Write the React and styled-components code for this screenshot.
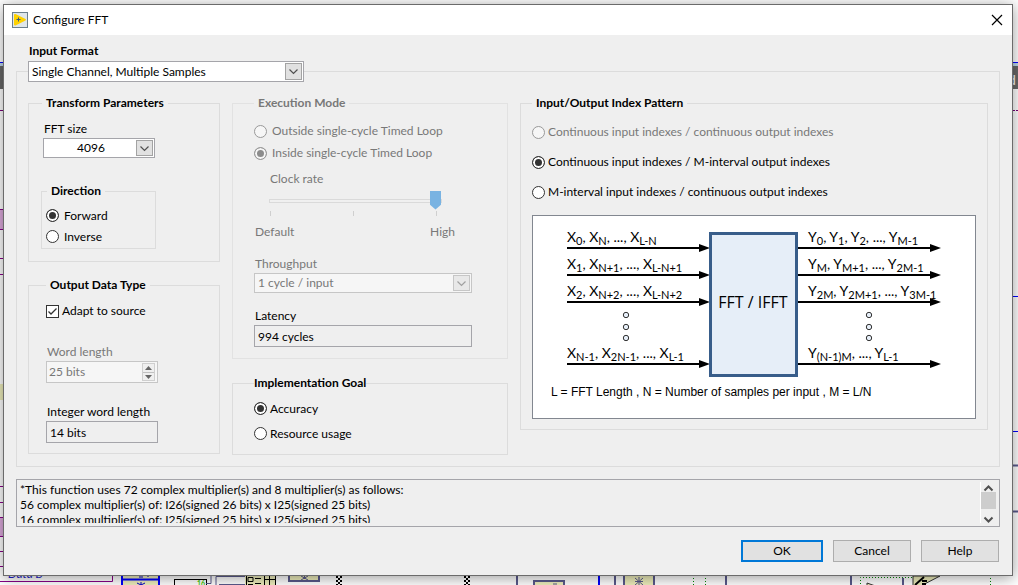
import React from "react";
import styled, { createGlobalStyle, css } from "styled-components";

const Global = createGlobalStyle`
  * { box-sizing: border-box; }
  body {
    margin: 0;
    background: #fff;
    color: #000;
    font: 12px/16px Lato, "Open Sans", sans-serif;
  }
  button, input, select, textarea { font: inherit; color: inherit; }
`;

const Desktop = styled.main`
  position: relative;
  min-height: 100vh;
  overflow: hidden;
  padding: 4px 5px 9px 3px;
`;

const Backdrop = styled.svg`
  position: absolute;
  inset: 0;
  width: 100%;
  height: 100%;
`;

const Dialog = styled.section`
  position: relative;
  border: 1px solid #6b6b6b;
  background: #efefef;
  box-shadow: 0 2px 14px rgba(0, 0, 0, 0.4);
`;

const TitleBar = styled.header`
  display: flex;
  align-items: center;
  gap: 5px;
  height: 30px;
  padding: 0 7px 0 8px;
  background: #fff;
`;

const Title = styled.h1`
  flex: 1;
  margin: 0;
  font-size: 12px;
  font-weight: 400;
`;

const CloseButton = styled.button`
  display: grid;
  place-items: center;
  padding: 2px;
  border: 0;
  background: none;
`;

const Content = styled.div`
  padding: 8px 12px 13px 12px;
`;

const FormatField = styled.div`
  position: relative;
  display: grid;
  width: 276px;
  margin: 0 0 -11px 12px;
`;

const FormatLabel = styled.label`
  font-weight: 700;
  padding-left: 1px;
  margin-bottom: 2px;
`;

const Frame = styled.div`
  display: grid;
  grid-template-columns: 192fr 276fr 468fr;
  gap: 12px;
  align-items: start;
  border: 1px solid #dcdcdc;
  padding: 23px 11px 11px;
`;

const Column = styled.div`
  display: flex;
  flex-direction: column;
  gap: ${(p) => p.$gap || 15}px;
`;

const Group = styled.fieldset`
  min-width: 0;
  margin: ${(p) => p.$top || 0}px 0 0;
  border: 1px solid ${(p) => (p.$dim ? "#e2e2e2" : "#dcdcdc")};
  padding: ${(p) => p.$pad};
  width: ${(p) => p.$width || "auto"};
`;

const Legend = styled.legend`
  margin-left: ${(p) => p.$indent || 0}px;
  padding: 0 ${(p) => (p.$tight ? 0 : 4)}px;
  font-weight: 700;
  color: ${(p) => (p.$dim ? "#787878" : "#000")};
`;

const Field = styled.div`
  display: grid;
  grid-template-columns: minmax(0, 1fr);
  width: ${(p) => p.$width || "auto"};
  margin-top: ${(p) => p.$top || 0}px;
  margin-left: ${(p) => p.$indent || 0}px;
`;

const FieldLabel = styled.label`
  padding-left: 1px;
  margin-bottom: ${(p) => p.$below || 1}px;
  color: ${(p) => (p.$dim ? "#787878" : "#000")};
`;

const SelectBox = styled.span`
  position: relative;
  display: block;
`;

const Select = styled.select`
  appearance: none;
  display: block;
  width: 100%;
  height: ${(p) => p.$height || 20}px;
  padding: 0 ${(p) => (p.$align ? 19 : 24)}px 0 3px;
  border: 1px solid ${(p) => (p.disabled ? "#c6c6c6" : "#a5a5aa")};
  border-radius: 0;
  background: ${(p) => (p.disabled ? "#f6f6f6" : "#fff")};
  color: ${(p) => (p.disabled ? "#787878" : "#000")};
  opacity: 1;
  text-align-last: ${(p) => p.$align || "left"};
`;

const SelectArrow = styled.span`
  position: absolute;
  top: 2px;
  right: 2px;
  bottom: 2px;
  width: 17px;
  display: grid;
  place-items: center;
  pointer-events: none;
  border: 1px solid ${(p) => (p.$dim ? "#c6c6c6" : "#a3a3a3")};
  background: ${(p) => (p.$dim ? "#e8e8e8" : "#e1e1e1")};
  color: ${(p) => (p.$dim ? "#a0a0a0" : "#505050")};
`;

const Choice = styled.label`
  display: flex;
  align-items: center;
  gap: ${(p) => p.$gap || 3}px;
  height: ${(p) => p.$height || 16}px;
  color: ${(p) => (p.$dim ? "#787878" : "#000")};
  white-space: nowrap;
`;

const mark = css`
  appearance: none;
  flex: none;
  width: 13px;
  height: 13px;
  margin: 0;
  border: 1px solid #333;
  background: #fff;
`;

const RadioInput = styled.input`
  ${mark}
  border-radius: 50%;
  &:checked { background: #333; box-shadow: inset 0 0 0 2px #fff; }
  &:disabled { border-color: #999; background: #f6f6f6; }
  &:disabled:checked { background: #8c8c8c; box-shadow: inset 0 0 0 2px #f6f6f6; }
`;

const CheckInput = styled.input`
  ${mark}
  display: block;
`;

const CheckMark = styled.span`
  position: relative;
  svg { position: absolute; inset: 0; pointer-events: none; }
`;

const Spinner = styled.div`
  display: flex;
  align-items: center;
  height: 22px;
  border: 1px solid #c6c6c6;
  background: #f6f6f6;
  padding-right: 2px;
`;

const SpinnerInput = styled.input`
  flex: 1;
  min-width: 0;
  width: 100%;
  border: 0;
  padding: 0 2px;
  background: none;
  color: #787878;
`;

const SpinButtons = styled.span`
  flex: none;
  display: grid;
  width: 13px;
  border: 1px solid #cfcfcf;
`;

const SpinButton = styled.button`
  display: grid;
  place-items: center;
  height: 8px;
  padding: 0;
  border: 0;
  background: #efefef;
  & + & { border-top: 1px solid #c0c0c0; }
`;

const ReadOut = styled.input`
  width: 100%;
  height: 22px;
  padding: 0 3px;
  border: 1px solid #a5a5aa;
  background: #efefef;
`;

const Slider = styled.div`
  display: grid;
  width: 176px;
  margin: 7px 0 0 15px;
`;

const Range = styled.input`
  appearance: none;
  width: 100%;
  height: 19px;
  margin: 0;
  background: none;
  &::-webkit-slider-runnable-track {
    height: 4px;
    margin-right: 3px;
    border: 1px solid #dadada;
    background: #f0f0f0;
  }
  &::-webkit-slider-thumb {
    appearance: none;
    width: 11px;
    height: 19px;
    margin-top: -9px;
    background: #79b3e2;
    clip-path: polygon(0 0, 100% 0, 100% 75%, 50% 100%, 0 75%);
  }
`;

const Ticks = styled.div`
  display: flex;
  justify-content: space-between;
  margin: 1px 8px 0 1px;
  i { width: 1px; height: 5px; background: #cfcfcf; }
`;

const RangeEnds = styled.div`
  display: flex;
  justify-content: space-between;
  width: 201px;
  margin-top: 8px;
  padding-left: 1px;
  color: #787878;
`;

const Figure = styled.figure`
  margin: 8px 0 0;
  border: 1px solid #828790;
  background: #fff;
  svg { display: block; width: 100%; height: auto; }
`;

const LogBox = styled.div`
  display: flex;
  height: 48px;
  margin-top: 12px;
  padding: 2px 3px 3px 0;
  border: 1px solid #a5a5aa;
`;

const LogText = styled.textarea`
  flex: 1;
  border: 0;
  margin: 0;
  padding: 0 3px;
  resize: none;
  overflow: hidden;
  outline: 0;
  background: none;
  line-height: 15px;
`;

const ScrollBar = styled.div`
  display: grid;
  grid-template-rows: 10px 17px 1fr;
  width: 16px;
  border-left: 1px solid #fff;
  justify-items: center;
  b { width: 100%; background: #cdcdcd; }
`;

const ScrollButton = styled.button`
  display: grid;
  place-items: end center;
  padding: 0;
  border: 0;
  background: none;
  color: #505050;
`;

const Actions = styled.footer`
  display: flex;
  justify-content: flex-end;
  gap: 10px;
  margin-top: 13px;
  padding-right: 1px;
`;

const ActionButton = styled.button`
  width: ${(p) => (p.$primary ? 82 : 78)}px;
  height: 22px;
  padding: 0;
  border: ${(p) => (p.$primary ? "2px solid #0078d7" : "1px solid #adadad")};
  background: #e1e1e1;
`;

const Chevron = ({ up = false, bold = false }) => (
  <svg width="11" height="7" viewBox="0 0 11 7" aria-hidden="true">
    <path
      d={up ? "M1.5 5.5l4-4 4 4" : "M1.5 1.5l4 4 4-4"}
      fill="none"
      stroke="currentColor"
      strokeWidth={bold ? 2 : 1.2}
    />
  </svg>
);

function DropDown({ id, options, disabled, height, align }) {
  return (
    <SelectBox>
      <Select id={id} disabled={disabled} $height={height} $align={align}>
        {options.map((o) => (
          <option key={o}>{o}</option>
        ))}
      </Select>
      <SelectArrow $dim={disabled}>
        <Chevron />
      </SelectArrow>
    </SelectBox>
  );
}

function Radio({ name, label, checked, disabled, height, gap }) {
  return (
    <Choice $height={height} $gap={gap} $dim={disabled}>
      <RadioInput type="radio" name={name} defaultChecked={checked} disabled={disabled} />
      {label}
    </Choice>
  );
}

/* Terms are [base, subscript] pairs, drawn as a comma separated list. */
function Series({ x, y, terms }) {
  return (
    <text x={x} y={y} fontFamily="Lato, sans-serif" fontSize="14">
      {terms.map(([base, sub], i) => (
        <React.Fragment key={i}>
          <tspan>{base}</tspan>
          {sub && (
            <tspan dy="3" fontSize="11">
              {sub}
            </tspan>
          )}
          {i < terms.length - 1 && <tspan dy={sub ? -3 : 0}>{", "}</tspan>}
        </React.Fragment>
      ))}
    </text>
  );
}

function Arrow({ x1, x2, y }) {
  return (
    <g>
      <path d={`M${x1} ${y}H${x2 - 6}`} stroke="#000" strokeWidth="2" />
      <path d={`M${x2} ${y}l-11 -4v8z`} />
    </g>
  );
}

const rows = [
  {
    y: 32,
    input: [["X", "0"], ["X", "N"], ["..."], ["X", "L-N"]],
    output: [["Y", "0"], ["Y", "1"], ["Y", "2"], ["..."], ["Y", "M-1"]],
  },
  {
    y: 59,
    input: [["X", "1"], ["X", "N+1"], ["..."], ["X", "L-N+1"]],
    output: [["Y", "M"], ["Y", "M+1"], ["..."], ["Y", "2M-1"]],
  },
  {
    y: 86,
    input: [["X", "2"], ["X", "N+2"], ["..."], ["X", "L-N+2"]],
    output: [["Y", "2M"], ["Y", "2M+1"], ["..."], ["Y", "3M-1"]],
  },
  {
    y: 148,
    input: [["X", "N-1"], ["X", "2N-1"], ["..."], ["X", "L-1"]],
    output: [["Y", "(N-1)M"], ["..."], ["Y", "L-1"]],
  },
];

function Diagram() {
  return (
    <svg viewBox="0 0 442 202" role="img" aria-label="FFT index pattern">
      {rows.map((r) => (
        <g key={r.y}>
          <Series x={34} y={r.y - 6} terms={r.input} />
          <Arrow x1={34} x2={177} y={r.y} />
          <Series x={275} y={r.y - 6} terms={r.output} />
          <Arrow x1={264} x2={408} y={r.y} />
        </g>
      ))}
      {[93, 336].map((x) =>
        [99, 111, 122].map((y) => (
          <circle key={`${x}-${y}`} cx={x} cy={y} r="2.7" fill="#e6eef8" stroke="#333" />
        ))
      )}
      <rect x="177.5" y="17.5" width="86" height="142" fill="#e6eef8" stroke="#385d8a" strokeWidth="3" />
      <text x="220" y="92" textAnchor="middle" fontFamily="'Open Sans', sans-serif" fontSize="16">
        FFT / IFFT
      </text>
      <text x="18" y="180" fontFamily="'Liberation Sans', sans-serif" fontSize="12">
        L = FFT Length , N = Number of samples per input , M = L/N
      </text>
    </svg>
  );
}

/* The block diagram that shows round the edges of the dialog. */
function BlockDiagram() {
  return (
    <Backdrop aria-hidden="true">
      <defs>
        <pattern id="checker" width="4" height="4" patternUnits="userSpaceOnUse">
          <rect width="4" height="4" fill="#fff" />
          <path d="M0 0h2v2h-2zM2 2h2v2h-2z" />
        </pattern>
      </defs>
      <path d="M0 62.5H1018M1010 296.5H1018M1010 431.5H1018" stroke="#00f" />
      <path d="M0 63H1018V66H0z" fill="#bcd7ea" />
      <path d="M0 66H1018V89H0z" fill="#686868" />
      <text x="1008" y="85" fontSize="14" fill="#fff">d</text>
      <path d="M0 110.5H1018" stroke="#707" strokeDasharray="3 1" />
      <path d="M1010 465.5H1018M1010 511.5H1018" stroke="#5a5a8c" strokeWidth="2" />
      <path d="M0 210H4V229H0zM0 518H4V536H0z" fill="#dcaadc" />
      <path
        d="M0 209.5H4M0 229.5H4M0 258.5H4M0 274.5H4M0 486.5H4M0 502.5H4M0 517.5H4M0 536.5H4M0 551.5H4M0 566.5H4"
        stroke="#808"
      />
      <path d="M0 384H4V400H0z" fill="#eeeebc" />
      <path d="M0 581.5H112.5V570" fill="none" stroke="#808" />
      <text x="8" y="578" fontSize="12" fontStyle="italic" fill="#22c">Data B</text>
      <rect x="122" y="570" width="37" height="20" fill="#eeeebc" stroke="#00f" strokeWidth="2" />
      <path d="M122 579.5H159" stroke="#00f" strokeWidth="2" />
      <path d="M137 583l8 4m0-4l-8 4m4-5v4M139 577h4m5-2v2" stroke="#00c" />
      <rect x="174.500" y="579.500" width="32" height="12" fill="#fff" stroke="#000" />
      <text x="197" y="586" fontSize="7" fontWeight="700" fill="#4c0">16</text>
      <path d="M206 583.500h5v-8M216 590V576.500H246M219 584.500H246" fill="none" stroke="#5a5a8c" />
      <path d="M245 575h30v10h-30z" fill="#eeeebc" />
      <path d="M246.500 575v10M264.500 575v10M275.500 575v10M264 579.500h11M269.500 575v10M248 577.500h5v4h-5zM255 578.500h6M248 584.500h5M255 583.500h6" fill="none" stroke="#000" />
      <path d="M289 572V581H319V572" fill="#eeeebc" stroke="#5a5a8c" strokeWidth="2" />
      <path d="M301 576l7 4m0-4l-7 4m3.500-5v4" stroke="#5a5a8c" />
      <path d="M336 575h6v10h-6zM464 575h6v10h-6z" fill="url(#checker)" />
      <path d="M517 575v10M615 575v10M726 575v10M851 575v10M903 578v7" stroke="#5a5a8c" strokeWidth="2" />
      <path d="M599 575v10" stroke="#00f" strokeWidth="2" />
      <rect x="534" y="581" width="30" height="12" fill="#eeeebc" stroke="#5a5a8c" strokeWidth="2" />
      <rect x="624" y="570" width="30" height="22" fill="#eeeebc" stroke="#5a5a8c" strokeWidth="2" />
      <path d="M553 584h4M635 578l8 7m0-7l-8 7m4-8v8M635 581.500h8" stroke="#5a5a8c" />
      <path d="M693.500 575v10M705.500 575v10M860.500 590V577.500H913M990.500 575v10" fill="none" stroke="#080" strokeDasharray="1 2" />
      <path d="M913 576h27l-27 14z" fill="#eeeebc" stroke="#333" />
      <path d="M915 585l9-8M922 581h5m-5 3h4" stroke="#000" strokeWidth="2" />
      <path d="M867 583l14 5h-14z" fill="#eeeebc" stroke="#333" />
    </Backdrop>
  );
}

export default function App() {
  return (
    <Desktop>
      <Global />
      <BlockDiagram />
      <Dialog aria-labelledby="title">
        <TitleBar>
          <svg width="16" height="16" viewBox="0 0 16 16" aria-hidden="true">
            <rect x=".5" y=".5" width="15" height="15" fill="#dfe6ea" stroke="#6c7f8c" />
            <path d="M2 3q0-1.500 1.500-1L13.500 7q1 .8 0 1.500L3.500 13.500q-1.500.3-1.500-1z" fill="#ffd200" />
            <path d="M4.500 7.500h4m-2-2v4" stroke="#3b5a78" />
          </svg>
          <Title id="title">Configure FFT</Title>
          <CloseButton aria-label="Close">
            <svg width="12" height="12" viewBox="0 0 12 12">
              <path d="M1 1l10 10M11 1L1 11" stroke="#000" strokeWidth="1.200" />
            </svg>
          </CloseButton>
        </TitleBar>
        <Content>
          <FormatField>
            <FormatLabel htmlFor="format">Input Format</FormatLabel>
            <DropDown id="format" height={21} options={["Single Channel, Multiple Samples"]} />
          </FormatField>
          <Frame>
            <Column>
              <Group $pad="10px 14px 12px 12px">
                <Legend $indent={1}>Transform Parameters</Legend>
                <Field $width="112px" $indent={2}>
                  <FieldLabel htmlFor="size">FFT size</FieldLabel>
                  <DropDown id="size" options={["4096"]} align="center" />
                </Field>
                <Group $pad="6px 4px 1px" $width="115px" $top={25}>
                  <Legend $indent={1}>Direction</Legend>
                  <Radio name="dir" label="Forward" checked height={21} gap={5} />
                  <Radio name="dir" label="Inverse" height={21} gap={5} />
                </Group>
              </Group>
              <Group $pad="10px 17px 10px">
                <Legend>Output Data Type</Legend>
                <Choice>
                  <CheckMark>
                    <CheckInput type="checkbox" defaultChecked />
                    <svg width="13" height="13" viewBox="0 0 13 13">
                      <path d="M2.500 6.500l2.500 2.500L10.500 3.500" fill="none" stroke="#333" strokeWidth="1.300" />
                    </svg>
                  </CheckMark>
                  Adapt to source
                </Choice>
                <Field $width="112px" $top={25}>
                  <FieldLabel htmlFor="word" $dim>Word length</FieldLabel>
                  <Spinner>
                    <SpinnerInput id="word" defaultValue="25 bits" disabled />
                    <SpinButtons>
                      <SpinButton disabled aria-label="Increase">
                        <svg width="7" height="4"><path d="M0 4L3.500 0L7 4z" fill="#666" /></svg>
                      </SpinButton>
                      <SpinButton disabled aria-label="Decrease">
                        <svg width="7" height="4"><path d="M0 0L3.500 4L7 0z" fill="#666" /></svg>
                      </SpinButton>
                    </SpinButtons>
                  </Spinner>
                </Field>
                <Field $width="112px" $top={21}>
                  <FieldLabel htmlFor="intword">Integer word length</FieldLabel>
                  <ReadOut id="intword" defaultValue="14 bits" readOnly />
                </Field>
              </Group>
            </Column>
            <Column $gap={16}>
              <Group $dim $pad="9px 21px 11px">
                <Legend $dim>Execution Mode</Legend>
                <Radio name="mode" label="Outside single-cycle Timed Loop" disabled height={22} gap={5} />
                <Radio name="mode" label="Inside single-cycle Timed Loop" checked disabled height={22} gap={5} />
                <Slider>
                  <FieldLabel htmlFor="clock" $dim $below={4}>Clock rate</FieldLabel>
                  <Range id="clock" type="range" min="0" max="2" defaultValue="2" disabled />
                  <Ticks><i /><i /><i /></Ticks>
                </Slider>
                <RangeEnds><span>Default</span><span>High</span></RangeEnds>
                <Field $width="218px" $top={16}>
                  <FieldLabel htmlFor="through" $dim>Throughput</FieldLabel>
                  <DropDown id="through" options={["1 cycle / input"]} disabled />
                </Field>
                <Field $width="218px" $top={15}>
                  <FieldLabel htmlFor="latency">Latency</FieldLabel>
                  <ReadOut id="latency" defaultValue="994 cycles" readOnly />
                </Field>
              </Group>
              <Group $pad="5px 21px 8px">
                <Legend $tight>Implementation Goal</Legend>
                <Radio name="goal" label="Accuracy" checked height={25} />
                <Radio name="goal" label="Resource usage" height={25} />
              </Group>
            </Column>
            <Column>
              <Group $pad="6px 11px 10px">
                <Legend>Input/Output Index Pattern</Legend>
                <Radio name="io" label="Continuous input indexes / continuous output indexes" disabled height={30} />
                <Radio name="io" label="Continuous input indexes / M-interval output indexes" checked height={30} />
                <Radio name="io" label="M-interval input indexes / continuous output indexes" height={30} />
                <Figure><Diagram /></Figure>
              </Group>
            </Column>
          </Frame>
          <LogBox>
            <LogText
              readOnly
              aria-label="Resource summary"
              defaultValue={
                "*This function uses 72 complex multiplier(s) and 8 multiplier(s) as follows:\n56 complex multiplier(s) of: I26(signed 26 bits) x I25(signed 25 bits)\n16 complex multiplier(s) of: I25(signed 25 bits) x I25(signed 25 bits)"
              }
            />
            <ScrollBar>
              <ScrollButton aria-label="Scroll up"><Chevron up bold /></ScrollButton>
              <b />
              <ScrollButton aria-label="Scroll down"><Chevron bold /></ScrollButton>
            </ScrollBar>
          </LogBox>
          <Actions>
            <ActionButton $primary>OK</ActionButton>
            <ActionButton>Cancel</ActionButton>
            <ActionButton>Help</ActionButton>
          </Actions>
        </Content>
      </Dialog>
    </Desktop>
  );
}
